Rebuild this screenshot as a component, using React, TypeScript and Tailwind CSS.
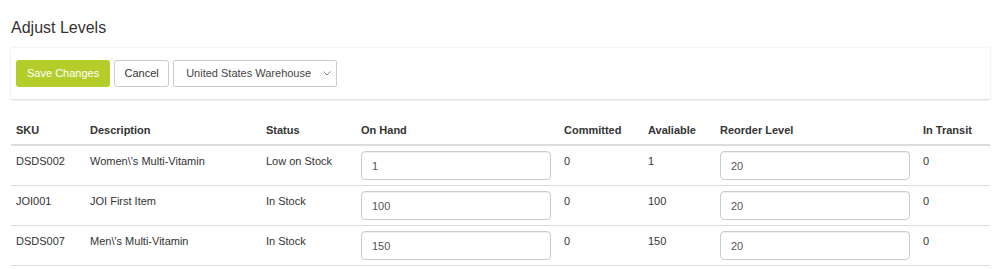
import React from "react";

type Row = {
  sku: string;
  description: string;
  status: string;
  onHand: string;
  committed: string;
  available: string;
  reorder: string;
  transit: string;
};

const ROWS: Row[] = [
  { sku: "DSDS002", description: "Women\\'s Multi-Vitamin", status: "Low on Stock", onHand: "1", committed: "0", available: "1", reorder: "20", transit: "0" },
  { sku: "JOI001", description: "JOI First Item", status: "In Stock", onHand: "100", committed: "0", available: "100", reorder: "20", transit: "0" },
  { sku: "DSDS007", description: "Men\\'s Multi-Vitamin", status: "In Stock", onHand: "150", committed: "0", available: "150", reorder: "20", transit: "0" },
];

const COLS = [
  { label: "SKU", w: "w-[74px]" },
  { label: "Description", w: "w-[176px]" },
  { label: "Status", w: "w-[95px]" },
  { label: "On Hand", w: "w-[203px]" },
  { label: "Committed", w: "w-[84px]" },
  { label: "Avaliable", w: "w-[72px]" },
  { label: "Reorder Level", w: "w-[203px]" },
  { label: "In Transit", w: "w-[72px]" },
];

function NumInput({ value }: { value: string }) {
  return (
    <input
      defaultValue={value}
      className="block w-[190px] h-[29px] px-[10px] text-[11px] text-[#555] bg-white border border-[#ccc] rounded-[4px] outline-none shadow-[inset_0_1px_1px_rgba(0,0,0,0.075)]"
    />
  );
}

export default function App() {
  return (
    <div className="w-[1000px] h-[269px] bg-white text-[#333] pl-[11px] pr-[10px] pt-[17px] overflow-hidden" style={{ fontFamily: '"Liberation Sans", Arial, sans-serif' }}>
      {/* title */}
      <h1 className="text-[16px] leading-[20px] font-normal pt-[1px]">Adjust Levels</h1>

      {/* toolbar panel */}
      <div className="mt-[9px] border-t border-[#f4f4f4] shadow-[0_1px_2px_rgba(0,0,0,0.16)] px-[5px] pt-[12px] pb-[12px] flex items-center gap-[4px]">
        <button className="h-[27px] px-[11px] rounded-[3px] bg-[#b5cd2b] text-white text-[11px]">Save Changes</button>
        <button className="h-[27px] w-[55px] rounded-[3px] bg-white border border-[#ccc] text-[#333] text-[11px]">Cancel</button>
        <div className="relative">
          <select className="appearance-none h-[27px] w-[164px] pl-[12px] pr-[20px] bg-white border border-[#ccc] rounded-[2px] text-[11px] text-[#444] outline-none">
            <option>United States Warehouse</option>
          </select>
          <svg className="absolute right-[6px] top-[11px] pointer-events-none" width="8" height="5" viewBox="0 0 8 5" fill="none">
            <path d="M0.5 0.5 L4 4 L7.5 0.5" stroke="#777" strokeWidth="0.9" />
          </svg>
        </div>
      </div>

      {/* table */}
      <table className="mt-[15px] w-[979px] table-fixed border-collapse text-[11px]">
        <colgroup>
          {COLS.map((c) => (
            <col key={c.label} className={c.w} />
          ))}
        </colgroup>
        <thead>
          <tr className="border-b-2 border-[#ddd]">
            {COLS.map((c) => (
              <th key={c.label} className="text-left font-bold px-[5px] pt-[7px] pb-[5px] leading-[18px]">
                {c.label}
              </th>
            ))}
          </tr>
        </thead>
        <tbody>
          {ROWS.map((r) => (
            <tr key={r.sku} className="border-b border-[#ddd] align-top">
              <td className="px-[5px] pt-[6px] leading-[18px]">{r.sku}</td>
              <td className="px-[5px] pt-[6px] leading-[18px]">{r.description}</td>
              <td className="px-[5px] pt-[6px] leading-[18px]">{r.status}</td>
              <td className="px-[5px] py-[5px]"><NumInput value={r.onHand} /></td>
              <td className="px-[5px] pt-[6px] leading-[18px]">{r.committed}</td>
              <td className="px-[5px] pt-[6px] leading-[18px]">{r.available}</td>
              <td className="px-[5px] py-[5px]"><NumInput value={r.reorder} /></td>
              <td className="px-[5px] pt-[6px] leading-[18px]">{r.transit}</td>
            </tr>
          ))}
        </tbody>
      </table>
    </div>
  );
}
